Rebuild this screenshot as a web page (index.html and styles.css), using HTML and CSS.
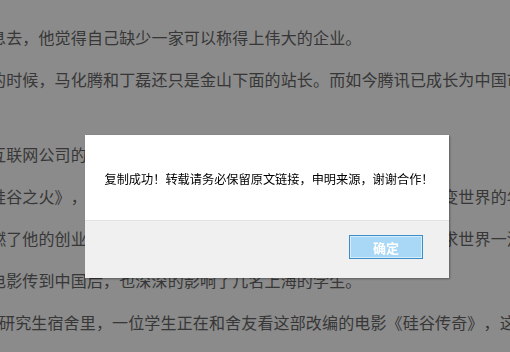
FILE: index.html
```html
<!DOCTYPE html>
<html>
<head>
  <meta charset="utf-8">
  <title>文章</title>
  <link rel="stylesheet" href="styles.css">
</head>
<body>
  <div class="article">
    <p>息去，他觉得自己缺少一家可以称得上伟大的企业。</p>
    <p>的时候，马化腾和丁磊还只是金山下面的站长。而如今腾讯已成长为中国市值最大的互联网公司。</p>
    <p class="gap">互联网公司的创始人，都曾读过这本书。</p>
    <p>硅谷之火》，这本书讲述了个人电脑革命的历史，以及那些想改变世界的年轻人。</p>
    <p>燃了他的创业激情，他希望自己将来也能够亲手创办一家真正追求世界一流的公司。</p>
    <p>电影传到中国后，也深深的影响了几名上海的学生。</p>
    <p class="full">研究生宿舍里，一位学生正在和舍友看这部改编的电影《硅谷传奇》，这时他突然说道。</p>
  </div>

  <div class="mask"></div>

  <div class="dialog">
    <div class="dialog-body">复制成功！转载请务必保留原文链接，申明来源，谢谢合作！</div>
    <div class="dialog-footer">
      <button class="btn-ok">确定</button>
    </div>
  </div>
</body>
</html>
```

FILE: styles.css
```css
html, body {
  margin: 0;
  padding: 0;
  overflow: hidden;
}

body {
  background-color: #fff;
  font-family: "Noto Sans CJK SC", "Noto Sans", sans-serif;
  text-spacing-trim: space-all;
}

.article {
  padding-top: 16px;
  margin-left: -10px;
  white-space: nowrap;
  color: #666;
  font-size: 16px;
  letter-spacing: 0.15px;
}

.article p {
  margin: 0;
  line-height: 42px;
}

.article p.gap {
  margin-top: 33px;
}

.article p.full {
  text-indent: 9px;
}

.mask {
  position: fixed;
  top: 0;
  left: 0;
  right: 0;
  bottom: 0;
  background-color: rgba(0, 0, 0, 0.455);
}

.dialog {
  position: fixed;
  left: 85px;
  top: 135px;
  width: 364px;
  background-color: #fff;
  box-shadow: 1px 1px 2px rgba(0, 0, 0, 0.35);
}

.dialog-body {
  height: 85px;
  display: flex;
  align-items: center;
  justify-content: center;
  padding: 2px 0 0 4px;
  box-sizing: border-box;
  font-size: 12.2px;
  color: #000;
}

.dialog-footer {
  height: 58px;
  box-sizing: border-box;
  border-top: 1px solid #e3e3e3;
  background-color: #f0f0f0;
  display: flex;
  justify-content: flex-end;
  align-items: flex-start;
  padding: 14px 26px 0 0;
}

.btn-ok {
  width: 74px;
  height: 24px;
  padding: 0;
  border: 1px solid #3f8dc6;
  box-shadow: inset 0 0 0 1px #d6edfb;
  background-color: #a8d8f5;
  color: #fff;
  font-family: "Noto Sans CJK SC", sans-serif;
  font-size: 13px;
  font-weight: bold;
  cursor: pointer;
}
```
